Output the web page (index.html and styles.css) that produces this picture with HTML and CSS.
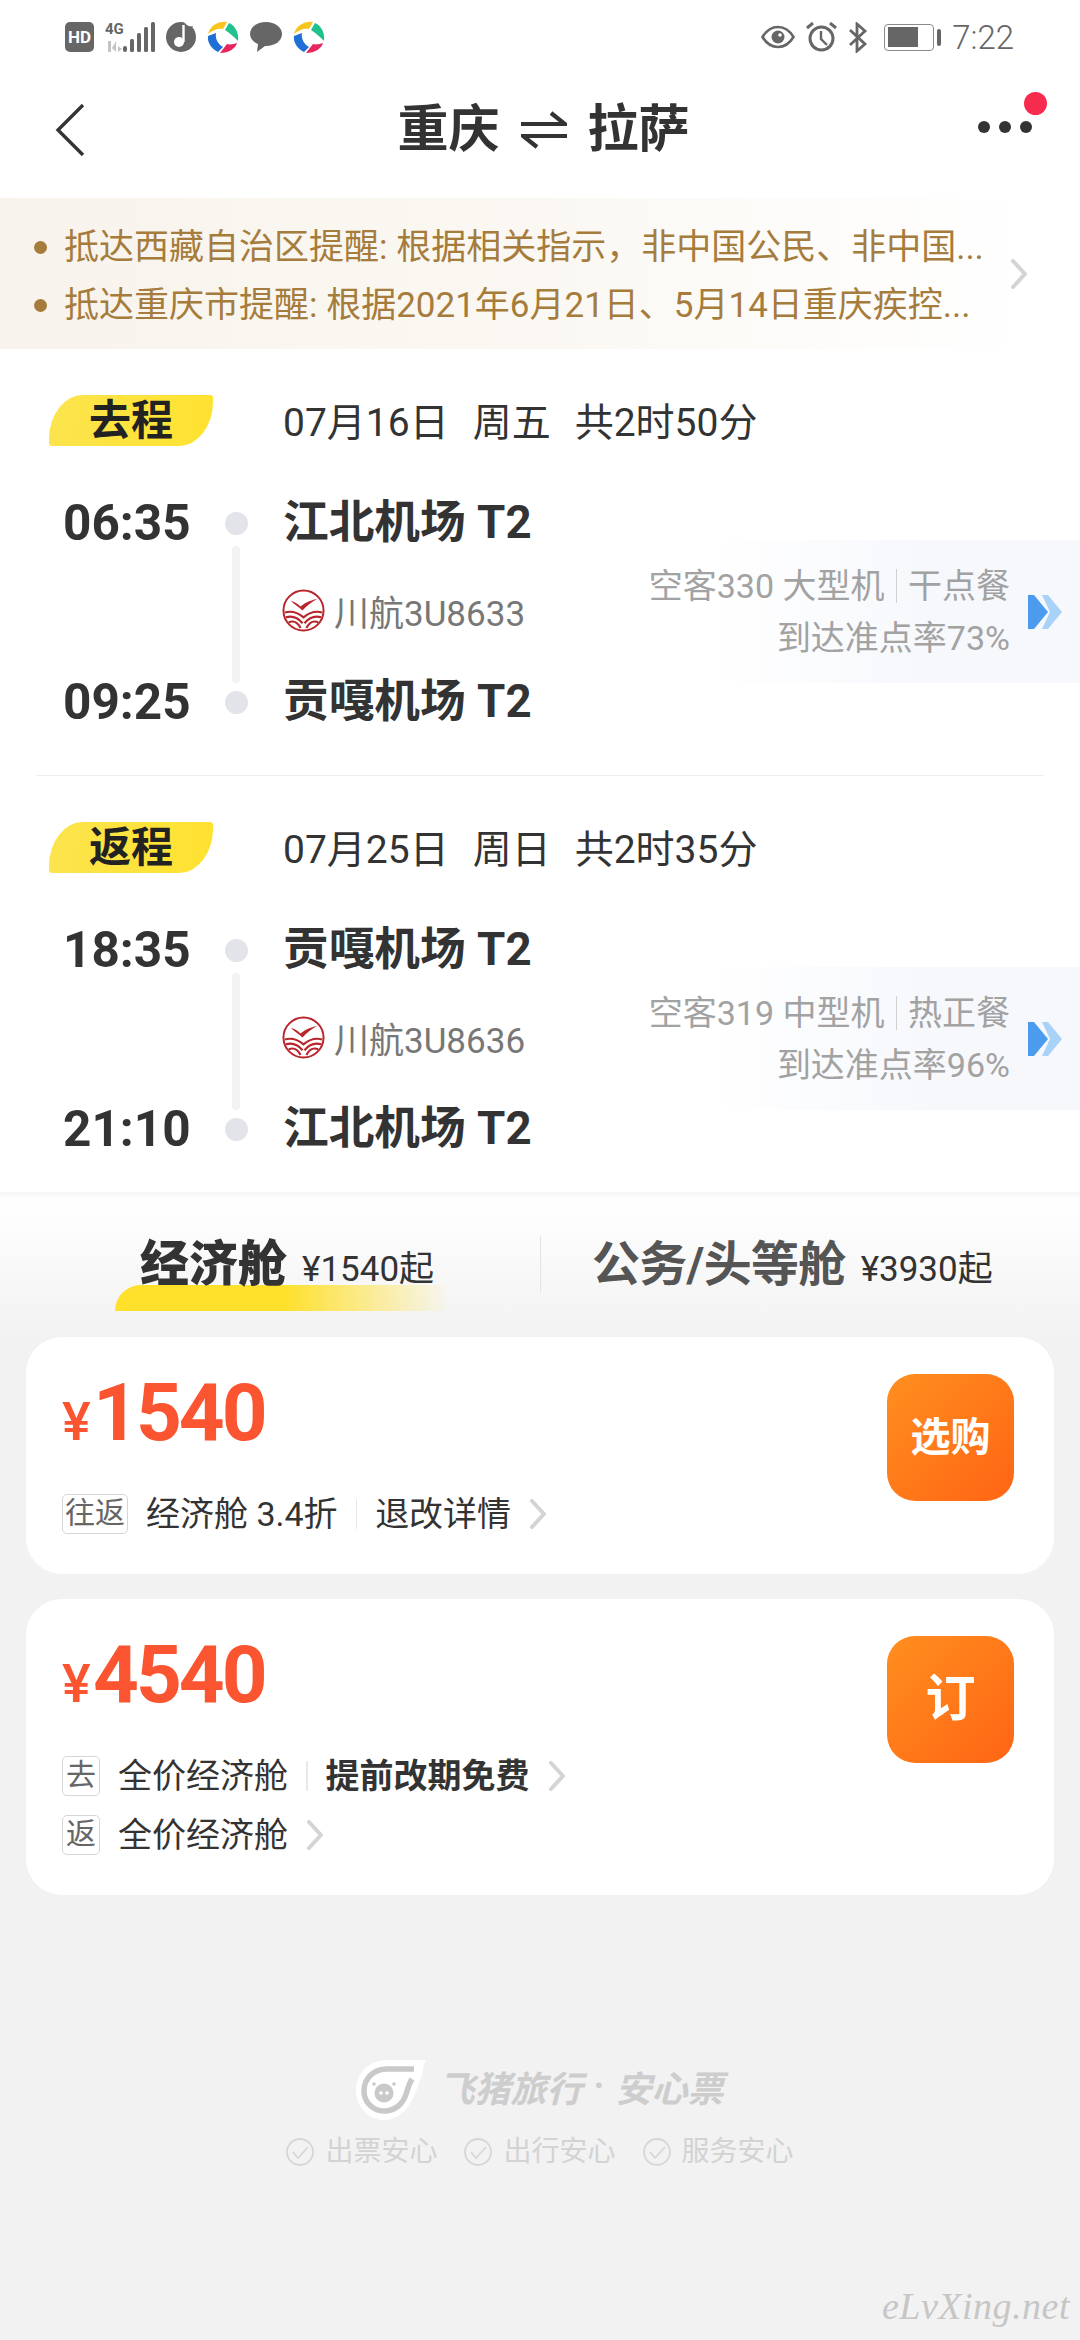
FILE: index.html
```html
<!DOCTYPE html>
<html lang="zh-CN">
<head>
<meta charset="utf-8">
<title>重庆 拉萨</title>
<link rel="stylesheet" href="styles.css">
</head>
<body>
<svg class="defs" aria-hidden="true">
  <symbol id="swirl" viewBox="0 0 32 32">
    <path fill="#f7c51e" d="M1 13C3 5 11 0 20 1L16 8C11 7 6 9 1 13Z"/>
    <path fill="#20c08f" d="M22 2C29 5 32 13 31 20C27 16 23 12 18 9Z"/>
    <path fill="#1f6fd6" d="M1 15L9 12C8 18 11 23 16 26L11 31C5 28 0 22 1 15Z"/>
    <path fill="#e8265e" d="M30 22C29 27 22 32 13 32L20 23C23 24 27 23 30 22Z"/>
  </symbol>
  <symbol id="airline" viewBox="0 0 44 44">
    <circle cx="22" cy="22" r="20.500" fill="#fff" stroke="#b8252b" stroke-width="2"/>
    <path fill="#b8252b" d="M9 12C13 13 16 15 19 18C22 15 28 12 36 10C30 14 25 17 21 22C17 18 13 16 9 12Z"/>
    <path fill="none" stroke="#b8252b" stroke-width="2.200" d="M3 24C10 22 16 24 22 29C28 24 34 22 41 24M4 29C11 27 16 29 21 35M40 29C33 27 28 29 23 35M7 34C12 32 16 34 19 40M37 34C32 32 28 34 25 40"/>
  </symbol>
  <symbol id="arrows" viewBox="0 0 35 34">
    <path fill="#a9d2f8" d="M14 0H20L34 17L20 34H14L22 17Z"/>
    <path fill="#4b9bef" d="M0 0H6L20 17L6 34H0Z"/>
  </symbol>
  <symbol id="chev" viewBox="0 0 18 30">
    <path fill="none" stroke="#d4d4d4" stroke-width="4" stroke-linecap="round" stroke-linejoin="round" d="M3 2L15 15L3 28"/>
  </symbol>
  <symbol id="check" viewBox="0 0 28 28">
    <circle cx="14" cy="14" r="13" fill="none" stroke="#d6d6d6" stroke-width="1.800"/>
    <path fill="none" stroke="#d6d6d6" stroke-width="1.800" d="M7 14L12 20L22 9"/>
  </symbol>
</svg>

<header class="status">
  <div class="status-group left">
    <span class="hd">HD</span>
    <svg class="ic-net" viewBox="0 0 50 32">
      <text x="0" y="13" class="net-text">4G</text>
      <path fill="#c4c4c4" d="M3 20h3v11H3zM7 27l4-7v11zM13 31v-6l4 3z"/>
      <rect x="18" y="25" width="4" height="6" rx="2" fill="#666"/>
      <rect x="25" y="18" width="4" height="13" rx="1.500" fill="#666"/>
      <rect x="32" y="12" width="4" height="19" rx="1.500" fill="#666"/>
      <rect x="39" y="6" width="4" height="25" rx="1.500" fill="#666"/>
      <rect x="46" y="1" width="4" height="30" rx="1.500" fill="#666"/>
    </svg>
    <svg class="ic-round" viewBox="0 0 30 30">
      <circle cx="15" cy="15" r="15" fill="#666"/>
      <path fill="#fff" d="M18 0C20 4 24 6 30 4V0Z"/>
      <path fill="#666" d="M19 1C21 4 24 5 27 4L24 10C22 10 20 9 19 7Z"/>
      <path fill="none" stroke="#fff" stroke-width="2.400" d="M17.500 3V20"/>
      <circle cx="13" cy="20" r="5" fill="#fff"/>
    </svg>
    <svg class="ic-swirl"><use href="#swirl"/></svg>
    <svg class="ic-bubble" viewBox="0 0 32 30">
      <path fill="#666" d="M16 0C25 0 32 5 32 12S25 24 16 24H15L7 30L8 22C3 20 0 16 0 12C0 5 7 0 16 0Z"/>
    </svg>
    <svg class="ic-swirl"><use href="#swirl"/></svg>
  </div>
  <div class="status-group right">
    <svg class="ic-eye" viewBox="0 0 34 24">
      <path fill="none" stroke="#666" stroke-width="2.600" d="M1.500 12C6 4.500 11 2 17 2S28 4.500 32.500 12C28 19.500 23 22 17 22S6 19.500 1.500 12Z"/>
      <circle cx="17" cy="12" r="6.500" fill="#666"/>
      <circle cx="19" cy="10" r="1.800" fill="#fff"/>
    </svg>
    <svg class="ic-alarm" viewBox="0 0 31 30">
      <circle cx="15.500" cy="16.500" r="11.500" fill="none" stroke="#666" stroke-width="3"/>
      <path fill="none" stroke="#666" stroke-width="2.400" d="M15 9V17L21 23"/>
      <path fill="none" stroke="#666" stroke-width="3" d="M1 6L7 1M30 6L24 1"/>
    </svg>
    <svg class="ic-bt" viewBox="0 0 20 31">
      <path fill="none" stroke="#666" stroke-width="2.800" d="M2 8L17 22L9 29V2L17 9L2 23"/>
    </svg>
    <div class="battery"><span class="cell"><span class="cell-fill"></span></span><span class="nub"></span></div>
    <span class="clock">7:22</span>
  </div>
</header>

<nav class="nav">
  <svg class="back" viewBox="0 0 30 52"><path fill="none" stroke="#333" stroke-width="3.400" d="M28 1L3 26L28 51"/></svg>
  <h1 class="route">
    <span>重庆</span>
    <svg class="swap" viewBox="0 0 46 38"><path fill="none" stroke="#333" stroke-width="4.200" d="M0 13H44L30 2M46 25H2L16 36"/></svg>
    <span>拉萨</span>
  </h1>
  <div class="more"><i></i><i></i><i></i><b class="badge"></b></div>
</nav>

<section class="notice">
  <div class="notice-list">
    <p class="notice-line">抵达西藏自治区提醒: 根据相关指示，非中国公民、非中国...</p>
    <p class="notice-line">抵达重庆市提醒: 根据2021年6月21日、5月14日重庆疾控...</p>
  </div>
  <svg class="notice-chev" viewBox="0 0 18 30"><use href="#chev"/></svg>
</section>

<section class="flights">
  <article class="trip">
    <div class="trip-head">
      <span class="trip-tag">去程</span>
      <div class="trip-date"><span>07月16日</span><span>周五</span><span>共2时50分</span></div>
    </div>
    <div class="leg">
      <span class="time from">06:35</span><span class="dot from"></span><span class="airport from">江北机场 T2</span>
      <div class="side">
        <div class="side-text">
          <p class="side-line"><span>空客330 大型机</span><i class="side-sep"></i><span>干点餐</span></p>
          <p class="side-line">到达准点率73%</p>
        </div>
        <svg class="side-arrows"><use href="#arrows"/></svg>
      </div>
      <span class="rail"></span>
      <div class="carrier"><svg class="carrier-logo"><use href="#airline"/></svg><span>川航3U8633</span></div>
      <span class="time to">09:25</span><span class="dot to"></span><span class="airport to">贡嘎机场 T2</span>
    </div>
  </article>
  <hr class="trip-rule">
  <article class="trip">
    <div class="trip-head">
      <span class="trip-tag">返程</span>
      <div class="trip-date"><span>07月25日</span><span>周日</span><span>共2时35分</span></div>
    </div>
    <div class="leg">
      <span class="time from">18:35</span><span class="dot from"></span><span class="airport from">贡嘎机场 T2</span>
      <div class="side">
        <div class="side-text">
          <p class="side-line"><span>空客319 中型机</span><i class="side-sep"></i><span>热正餐</span></p>
          <p class="side-line">到达准点率96%</p>
        </div>
        <svg class="side-arrows"><use href="#arrows"/></svg>
      </div>
      <span class="rail"></span>
      <div class="carrier"><svg class="carrier-logo"><use href="#airline"/></svg><span>川航3U8636</span></div>
      <span class="time to">21:10</span><span class="dot to"></span><span class="airport to">江北机场 T2</span>
    </div>
  </article>
</section>

<section class="cabins">
  <div class="tab tab-active"><strong>经济舱</strong><span>¥1540起</span></div>
  <div class="tab tab-other"><strong>公务/头等舱</strong><span>¥3930起</span></div>
</section>

<section class="offers">
  <article class="offer">
    <div class="offer-main">
      <div class="price"><span class="yen">¥</span><span class="amount">1540</span></div>
      <div class="meta">
        <span class="mini-tag wide">往返</span>
        <span>经济舱 3.4折</span>
        <i class="meta-sep"></i>
        <span>退改详情</span>
        <svg class="chev"><use href="#chev"/></svg>
      </div>
    </div>
    <div class="buy">选购</div>
  </article>
  <article class="offer">
    <div class="offer-main">
      <div class="price"><span class="yen">¥</span><span class="amount">4540</span></div>
      <div class="meta">
        <span class="mini-tag">去</span>
        <span>全价经济舱</span>
        <i class="meta-sep"></i>
        <strong>提前改期免费</strong>
        <svg class="chev"><use href="#chev"/></svg>
      </div>
      <div class="meta meta-next">
        <span class="mini-tag">返</span>
        <span>全价经济舱</span>
        <svg class="chev"><use href="#chev"/></svg>
      </div>
    </div>
    <div class="buy buy-large">订</div>
  </article>
</section>

<footer class="assure">
  <div class="brand">
    <svg class="pig" viewBox="0 0 70 60">
      <path fill="#fff" d="M30 0H70C66 6 68 14 64 20C62 26 60 32 56 40C50 52 40 60 28 60C12 60 0 46 0 30C0 14 13 0 30 0Z"/>
      <path fill="none" stroke="#c9c9c9" stroke-width="5.500" d="M58 9H31C17 9 8 19 8 31C8 43 18 51 28 51C39 51 47 44 50 34C52 28 53 24 56 19"/>
      <circle cx="28" cy="33" r="9.500" fill="#c9c9c9"/>
      <circle cx="25" cy="33" r="1.800" fill="#fff"/>
      <circle cx="31" cy="33" r="1.800" fill="#fff"/>
      <circle cx="18" cy="24" r="1.800" fill="#c9c9c9"/>
      <circle cx="38" cy="24" r="1.800" fill="#c9c9c9"/>
    </svg>
    <span class="brand-name">飞猪旅行</span>
    <span class="brand-dot">·</span>
    <span class="brand-name">安心票</span>
  </div>
  <div class="promises">
    <div class="promise"><svg class="check"><use href="#check"/></svg><span>出票安心</span></div>
    <div class="promise"><svg class="check"><use href="#check"/></svg><span>出行安心</span></div>
    <div class="promise"><svg class="check"><use href="#check"/></svg><span>服务安心</span></div>
  </div>
</footer>

<div class="watermark">eLvXing.net</div>
</body>
</html>
```
FILE: styles.css
```css
* { box-sizing: border-box; }
html, body { margin: 0; padding: 0; }
body {
  position: relative;
  width: 1080px;
  height: 2340px;
  overflow: hidden;
  background: #f2f2f2;
  color: #333;
  font-family: Roboto, "Noto Sans CJK SC", sans-serif;
}
p, h1 { margin: 0; }
i { display: block; }
svg { display: block; flex: none; }
.defs { position: absolute; width: 0; height: 0; }

/* status bar */
.status {
  height: 74px;
  padding: 0 66px 0 65px;
  display: flex;
  justify-content: space-between;
  align-items: center;
  background: #fff;
}
.status-group { display: flex; align-items: center; }
.status-group.left { gap: 11px; }
.hd {
  width: 29px;
  height: 30px;
  border-radius: 5px;
  background: #666;
  color: #fff;
  font-size: 17px;
  font-weight: 700;
  line-height: 30px;
  text-align: center;
}
.ic-net { width: 50px; height: 32px; }
.net-text { font-size: 15px; font-weight: 700; fill: #666; font-family: Roboto, sans-serif; }
.ic-round { width: 30px; height: 30px; }
.ic-swirl { width: 32px; height: 32px; }
.ic-bubble { width: 32px; height: 30px; }
.status-group.right { gap: 11px; }
.ic-eye { width: 34px; height: 24px; }
.ic-alarm { width: 31px; height: 30px; }
.ic-bt { width: 20px; height: 31px; margin-right: 5px; }
.battery { display: flex; align-items: center; gap: 3px; }
.cell {
  width: 50px;
  height: 27px;
  padding: 2px 3px;
  border: 1.5px solid #8a8a8a;
  border-radius: 4px;
  display: block;
}
.cell-fill { display: block; width: 30px; height: 20px; background: #666; }
.nub { width: 4px; height: 17px; border-radius: 2px; background: #666; }
.clock { font-size: 33px; font-weight: 300; color: #666; line-height: 1; }

/* nav */
.nav {
  height: 124px;
  padding: 0 48px 12px 55px;
  display: grid;
  grid-template-columns: 1fr auto 1fr;
  align-items: center;
  background: #fff;
}
.back { width: 30px; height: 52px; }
.route {
  display: flex;
  align-items: center;
  gap: 21px;
  font-size: 51px;
  font-weight: 700;
  line-height: 60px;
  color: #333;
}
.swap { width: 46px; height: 38px; }
.more {
  position: relative;
  justify-self: end;
  display: flex;
  gap: 9px;
  margin-top: -6px;
}
.more i { width: 12px; height: 12px; border-radius: 50%; background: #333; }
.badge {
  position: absolute;
  top: -29px;
  right: -15px;
  width: 23px;
  height: 23px;
  border-radius: 50%;
  background: #f62b4d;
}

/* notice */
.notice {
  height: 151px;
  padding: 21px 52px 14px 34px;
  display: flex;
  justify-content: space-between;
  align-items: center;
  background: linear-gradient(90deg, #f8f3ec 0%, #fbf8f3 50%, #ffffff 95%);
}
.notice-list { display: flex; flex-direction: column; }
.notice-line {
  position: relative;
  padding-left: 30px;
  font-size: 35px;
  line-height: 58px;
  color: #a67c3c;
  white-space: nowrap;
}
.notice-line::before {
  content: "";
  position: absolute;
  left: 0;
  top: 22px;
  width: 13px;
  height: 13px;
  border-radius: 50%;
  background: #a67c3c;
}
.notice-chev { width: 18px; height: 30px; margin-top: -6px; }

/* flights */
.flights { padding: 46px 0 33px; background: #fff; }
.trip-head { display: flex; align-items: flex-start; padding-left: 49px; gap: 70px; }
.trip-tag {
  width: 164px;
  height: 51px;
  border-radius: 34px 3px 34px 3px / 44px 3px 44px 3px;
  background: linear-gradient(100deg, #fbe44e 0%, #ffe22f 100%);
  color: #222;
  font-size: 42px;
  font-weight: 700;
  line-height: 51px;
  text-align: center;
}
.trip-date { display: flex; gap: 24px; padding-top: 3px; font-size: 39px; line-height: 51px; color: #333; }
.leg {
  margin-top: 44px;
  padding-left: 63px;
  display: grid;
  grid-template-columns: 157px 32px 31px 367px 430px;
  grid-template-rows: 60px 119px 60px;
  align-items: center;
}
.from { grid-row: 1; }
.to { grid-row: 3; }
.time { grid-column: 1; font-size: 49.500px; font-weight: 700; line-height: 60px; color: #333; }
.dot { grid-column: 2; justify-self: center; width: 23px; height: 23px; border-radius: 50%; background: #e3e4ea; }
.airport { grid-column: 4; font-size: 45.700px; font-weight: 700; line-height: 60px; color: #333; white-space: nowrap; }
.rail {
  grid-column: 2;
  grid-row: 2;
  justify-self: center;
  align-self: stretch;
  width: 8px;
  margin: -7px 0 -11px;
  border-radius: 4px;
  background: #f2f3f5;
}
.carrier {
  grid-column: 4;
  grid-row: 2;
  display: flex;
  align-items: center;
  gap: 9px;
  margin-top: -4px;
  font-size: 35px;
  color: #777;
  white-space: nowrap;
}
.carrier-logo { width: 43px; height: 43px; margin-left: -1px; }
.side {
  grid-column: 5;
  grid-row: 1 / span 3;
  height: 143px;
  margin-top: -2px;
  padding-right: 17px;
  display: flex;
  justify-content: flex-end;
  align-items: center;
  gap: 18px;
  background: linear-gradient(90deg, rgba(246,248,252,0) 15%, #f6f8fc 65%);
}
.side-text { display: flex; flex-direction: column; align-items: flex-end; gap: 8px; }
.side-line {
  display: flex;
  align-items: center;
  gap: 11px;
  font-size: 34px;
  line-height: 44px;
  color: #a2a2a2;
  white-space: nowrap;
}
.side-sep { width: 1.5px; height: 34px; background: #d0d0d0; }
.side-arrows { width: 35px; height: 34px; }
.trip-rule { height: 1px; margin: 43px 36px 46px; border: 0; background: #eeeeee; }

/* cabin tabs */
.cabins {
  height: 145px;
  padding-top: 44px;
  display: grid;
  grid-template-columns: 540px 540px;
  background: linear-gradient(180deg, #f6f6f6 0, #ffffff 8px, #f2f2f2 100%);
}
.tab { position: relative; display: flex; align-items: baseline; gap: 15px; height: 57px; }
.tab strong { font-size: 48px; font-weight: 700; line-height: 57px; }
.tab span { position: relative; z-index: 1; font-size: 35px; color: #333; }
.tab-active { padding-left: 140px; }
.tab-active strong { font-size: 49px; font-weight: 900; color: #333; position: relative; z-index: 1; }
.tab-active::after {
  content: "";
  position: absolute;
  left: 115px;
  top: 49px;
  width: 336px;
  height: 26px;
  border-radius: 26px 0 0 0;
  background: linear-gradient(90deg, #ffe02b 0%, #ffe02b 50%, rgba(255,226,60,0) 100%);
}
.tab-other { padding-left: 54px; border-left: 1px solid #e4e4e4; }
.tab-other strong { color: #555; letter-spacing: -0.700px; margin-left: -3px; }

/* offers */
.offers { padding: 0 26px; display: flex; flex-direction: column; gap: 25px; }
.offer {
  padding: 36px 40px 40px 36px;
  display: flex;
  justify-content: space-between;
  align-items: flex-start;
  background: #fff;
  border-radius: 36px;
}
.price { display: flex; align-items: baseline; height: 80px; line-height: 80px; color: #fa5530; }
.yen { font-size: 54px; font-weight: 500; width: 31px; }
.amount { font-size: 80px; font-weight: 700; letter-spacing: -3px; }
.meta {
  margin-top: 41px;
  display: flex;
  align-items: center;
  gap: 18px;
  font-size: 34px;
  line-height: 40px;
  color: #333;
  white-space: nowrap;
}
.meta strong { font-weight: 700; }
.meta-next { margin-top: 19px; }
.mini-tag {
  width: 38px;
  height: 40px;
  border: 1.5px solid #d6d6d6;
  border-radius: 5px;
  font-size: 30px;
  line-height: 36px;
  color: #666;
  text-align: center;
}
.mini-tag.wide { width: 66px; }
.meta-sep { width: 1.5px; height: 30px; background: #e8e8e8; }
.chev { width: 18px; height: 30px; }
.buy {
  width: 127px;
  height: 127px;
  margin-top: 1px;
  border-radius: 28px;
  background: linear-gradient(135deg, #ff8f1f 0%, #ff6414 100%);
  color: #fff;
  font-size: 40px;
  font-weight: 700;
  line-height: 127px;
  text-align: center;
}
.buy-large { font-size: 50px; }

/* footer */
.assure { margin-top: 165px; display: flex; flex-direction: column; align-items: center; }
.brand { display: flex; align-items: center; height: 59px; }
.pig { width: 70px; height: 60px; margin-right: 12px; }
.brand-name { margin-top: -8px; font-size: 36px; font-weight: 700; font-style: italic; color: #cdcdcd; white-space: nowrap; }
.brand-dot { width: 33px; margin-top: -8px; font-size: 36px; font-weight: 700; text-align: center; color: #cdcdcd; }
.promises { margin-top: 19px; display: flex; gap: 27px; }
.promise { display: flex; align-items: center; gap: 11px; font-size: 28px; line-height: 28px; color: #d3d3d3; }
.check { width: 28px; height: 28px; }

.watermark {
  position: absolute;
  right: 10px;
  bottom: 12px;
  font-family: "Liberation Serif", serif;
  font-size: 38px;
  font-style: italic;
  color: #c6c6c6;
  letter-spacing: 0.500px;
}
```
